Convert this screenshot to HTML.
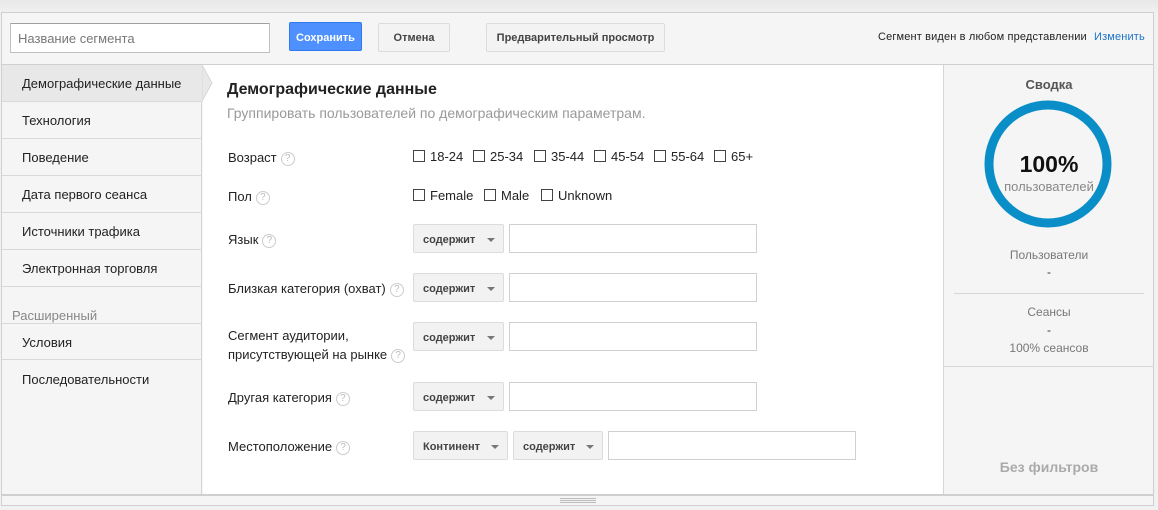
<!DOCTYPE html>
<html><head><meta charset="utf-8"><style>
*{box-sizing:border-box;margin:0;padding:0}
body{width:1158px;height:510px;position:relative;background:#f1f1f1;font-family:"Liberation Sans",Arial,sans-serif;font-size:13px;color:#222;overflow:hidden}
.a{position:absolute}
.top{left:0;top:0;width:1158px;height:12px;background:linear-gradient(#e8e8e8,#f0f0f0)}
.frame{left:1px;top:12px;width:1153px;height:494px;border:1px solid #cfcfcf;background:#f5f5f5}
.btn{position:absolute;height:29px;border:1px solid #dcdcdc;border-radius:2px;background:#f3f3f3;font-weight:bold;font-size:11px;color:#444;text-align:center;line-height:29px}
.side{left:2px;top:65px;width:200px;height:429px;background:#f5f5f5;border-right:1px solid #d6d6d6}
.si{position:absolute;left:0;width:200px;height:37px;border-bottom:1px solid #d9d9d9;padding-left:20px;line-height:37px;font-size:13px;color:#222}
.main{left:203px;top:65px;width:740px;height:429px;background:#fff}
.lbl{position:absolute;left:228px;font-size:13px;color:#222;line-height:19px}
.q{display:inline-block;width:14px;height:14px;border:1px solid #ccc;border-radius:50%;font-size:10px;color:#bbb;text-align:center;line-height:12px;vertical-align:middle;margin-left:4px}
.cb{position:absolute;font-size:13px;color:#222}
.cb i{display:inline-block;width:12px;height:12px;border:1px solid #444;vertical-align:-1px;margin-right:5px}
.dd{position:absolute;height:29px;background:#f2f2f2;border:1px solid #dcdcdc;border-radius:2px;font-size:11px;font-weight:bold;color:#444;line-height:30px;padding-left:9px}
.dd:after{content:"";position:absolute;right:8px;top:13px;border:4px solid transparent;border-top:4px solid #777;border-bottom:0}
.in{position:absolute;height:29px;width:248px;border:1px solid #d0d0d0;background:#fff}
.right{left:943px;top:65px;width:210px;height:429px;background:#f5f5f5;border-left:1px solid #d6d6d6}
.c{position:absolute;left:0;width:210px;text-align:center}
</style></head><body>
<div class="a top"></div>
<div class="a frame"></div>
<div class="a" style="left:10px;top:23px;width:260px;height:30px;background:#fff;border:1px solid #c0c0c0;border-top-color:#a0a0a0;padding-left:7px;line-height:30px;color:#777;font-size:13px">Название сегмента</div>
<div class="btn" style="left:289px;top:22px;width:73px;background:#4d90fe;border-color:#3079ed;color:#fff;line-height:30px">Сохранить</div>
<div class="btn" style="left:378px;top:23px;width:72px">Отмена</div>
<div class="btn" style="left:486px;top:23px;width:179px">Предварительный просмотр</div>
<div class="a" style="left:878px;top:31px;font-size:11px;letter-spacing:0.15px;color:#222">Сегмент виден в любом представлении <span style="color:#1a73c8;margin-left:4px">Изменить</span></div>
<div class="a" style="left:2px;top:64px;width:1151px;height:1px;background:#cfcfcf"></div>
<div class="a side">
<div class="si" style="top:0;background:#e8e8e8">Демографические данные</div>
<div class="si" style="top:37px">Технология</div>
<div class="si" style="top:74px">Поведение</div>
<div class="si" style="top:111px">Дата первого сеанса</div>
<div class="si" style="top:148px">Источники трафика</div>
<div class="si" style="top:185px">Электронная торговля</div>
<div class="a" style="left:10px;top:243px;color:#888;font-size:13px">Расширенный</div>
<div class="si" style="top:258px;border-top:1px solid #d9d9d9">Условия</div>
<div class="si" style="top:296px;border-bottom:0">Последовательности</div>
</div>
<div class="a main"></div>
<svg class="a" style="left:202px;top:65px" width="12" height="37"><path d="M0 0 L10 18 L0 36 Z" fill="#e8e8e8" stroke="#d6d6d6"/></svg>
<div class="a" style="left:227px;top:81px;font-size:16px;font-weight:bold;color:#222">Демографические данные</div>
<div class="a" style="left:227px;top:105px;font-size:14px;color:#999">Группировать пользователей по демографическим параметрам.</div>
<div class="lbl" style="top:148px">Возраст<span class="q">?</span></div>
<div class="cb" style="left:413px;top:149px"><i></i>18-24</div>
<div class="cb" style="left:473px;top:149px"><i></i>25-34</div>
<div class="cb" style="left:534px;top:149px"><i></i>35-44</div>
<div class="cb" style="left:594px;top:149px"><i></i>45-54</div>
<div class="cb" style="left:654px;top:149px"><i></i>55-64</div>
<div class="cb" style="left:714px;top:149px"><i></i>65+</div>
<div class="lbl" style="top:187px">Пол<span class="q">?</span></div>
<div class="cb" style="left:413px;top:188px"><i></i>Female</div>
<div class="cb" style="left:484px;top:188px"><i></i>Male</div>
<div class="cb" style="left:541px;top:188px"><i></i>Unknown</div>
<div class="lbl" style="top:230px">Язык<span class="q">?</span></div>
<div class="dd" style="left:413px;top:224px;width:91px">содержит</div><div class="in" style="left:509px;top:224px"></div>
<div class="lbl" style="top:279px">Близкая категория (охват)<span class="q">?</span></div>
<div class="dd" style="left:413px;top:273px;width:91px">содержит</div><div class="in" style="left:509px;top:273px"></div>
<div class="lbl" style="top:326px">Сегмент аудитории,<br>присутствующей на рынке<span class="q">?</span></div>
<div class="dd" style="left:413px;top:322px;width:91px">содержит</div><div class="in" style="left:509px;top:322px"></div>
<div class="lbl" style="top:388px">Другая категория<span class="q">?</span></div>
<div class="dd" style="left:413px;top:382px;width:91px">содержит</div><div class="in" style="left:509px;top:382px"></div>
<div class="lbl" style="top:437px">Местоположение<span class="q">?</span></div>
<div class="dd" style="left:413px;top:431px;width:95px">Континент</div>
<div class="dd" style="left:513px;top:431px;width:90px">содержит</div>
<div class="in" style="left:608px;top:431px"></div>
<div class="a right">
<div class="c" style="top:12px;font-size:13px;font-weight:bold;color:#555">Сводка</div>
<svg class="a" style="left:40px;top:35px" width="128" height="128"><circle cx="64" cy="64" r="59" fill="none" stroke="#0a8ec8" stroke-width="9"/></svg>
<div class="c" style="top:86px;font-size:23px;font-weight:bold;color:#111">100%</div>
<div class="c" style="top:114px;font-size:13px;color:#888">пользователей</div>
<div class="c" style="top:183px;font-size:12px;color:#777">Пользователи</div>
<div class="c" style="top:200px;font-size:12px;color:#333">-</div>
<div class="a" style="left:10px;top:228px;width:190px;height:1px;background:#d6d6d6"></div>
<div class="c" style="top:240px;font-size:12px;color:#777">Сеансы</div>
<div class="c" style="top:258px;font-size:12px;color:#333">-</div>
<div class="c" style="top:276px;font-size:12px;color:#777">100% сеансов</div>
<div class="a" style="left:0;top:301px;width:210px;height:1px;background:#d6d6d6"></div>
<div class="c" style="top:394px;font-size:14px;font-weight:bold;color:#aaa">Без фильтров</div>
</div>
<div class="a" style="left:2px;top:494px;width:1151px;height:2px;background:#cfcfcf"></div>
<div class="a" style="left:560px;top:498px;width:36px;height:5px;border-top:1px solid #bbb;border-bottom:1px solid #bbb"></div>
<div class="a" style="left:560px;top:500px;width:36px;height:1px;background:#bbb"></div>
</body></html>
